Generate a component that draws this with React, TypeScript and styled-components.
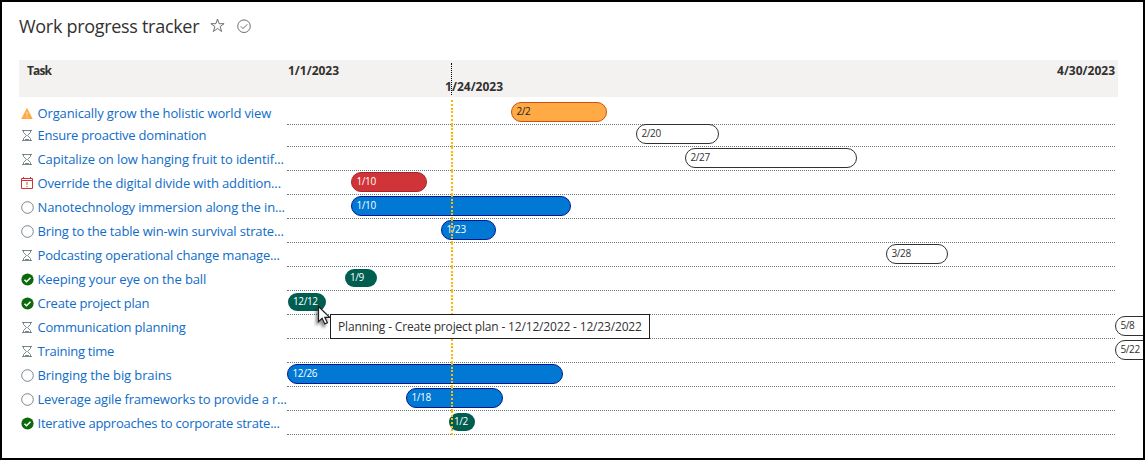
import React from 'react';
import styled, { createGlobalStyle, css } from 'styled-components';

const GlobalStyle = createGlobalStyle`
  * { box-sizing: border-box; }
  body {
    margin: 0;
    background: #fff;
    color: #323130;
    font-family: "Open Sans", "Noto Sans", sans-serif;
  }
`;

const Frame = styled.main`
  width: 1145px;
  height: 460px;
  border: 2px solid #000;
  padding-left: 17px;
  overflow: hidden;
`;

const TitleBar = styled.header`
  display: flex;
  align-items: center;
  height: 58px;
  padding-bottom: 11px;
`;

const Title = styled.h1`
  margin: 0;
  width: 191px;
  font-size: 18px;
  line-height: 24px;
  font-weight: 400;
  letter-spacing: -0.3px;
  white-space: nowrap;
`;

const TitleIcon = styled.svg`
  flex: none;
  width: 15px;
  height: 15px;
  margin-right: 12px;
  fill: none;
  stroke: #605e5c;
  stroke-width: 0.9;
`;

const Board = styled.section`
  position: relative;
  width: 1099px;
`;

const HeaderRow = styled.div`
  display: flex;
  height: 37px;
  margin-bottom: 1px;
  background: #f3f2f1;
  font-size: 12px;
  line-height: 16px;
  font-weight: 700;
`;

const TaskHeading = styled.div`
  width: 268px;
  padding: 3px 0 0 8px;
  letter-spacing: -0.9px;
`;

const DateScale = styled.div`
  display: flex;
  justify-content: space-between;
  width: 828px;
  padding: 3px 0 0 1px;
`;

const TodayMark = styled.div`
  width: 60px;
  margin-right: auto;
  margin-left: 106px;
  padding-top: 16px;
`;

const TodayTick = styled.i`
  position: absolute;
  left: 432px;
  top: 3px;
  height: 32px;
  border-left: 1px dotted #000;
`;

const Row = styled.div<{ $height: number }>`
  display: flex;
  height: ${(p) => p.$height}px;
`;

const NameCell = styled.div`
  display: flex;
  align-items: flex-end;
  width: 268px;
  padding: 0 0 3px 2px;
`;

const StatusIcon = styled.svg`
  flex: none;
  width: 13px;
  height: 13px;
  margin: 0 3.5px 2px 0;
`;

const TaskName = styled.a<{ $tracking: number }>`
  color: #0f6cc8;
  font-size: 13px;
  line-height: 18px;
  letter-spacing: ${(p) => p.$tracking}px;
  white-space: nowrap;
`;

const Track = styled.div<{ $first: boolean }>`
  position: relative;
  display: flex;
  align-items: flex-end;
  width: 828px;
  padding-bottom: 2px;
  border-bottom: 1px dotted #69797e;

  &::after {
    content: "";
    position: absolute;
    left: 164px;
    top: ${(p) => (p.$first ? 2 : 0)}px;
    bottom: -1px;
    width: 2px;
    background: repeating-linear-gradient(
      #ffb900 0 2px,
      transparent 2px calc((100% - 2px) / 6)
    );
  }
`;

type Tone = 'warning' | 'waiting' | 'late' | 'active' | 'done';

const tones = {
  warning: css`background: #ffaa44; border-color: #ca5010; color: #201f1e;`,
  waiting: css`background: #fff; border-color: #323130; color: #323130;`,
  late: css`background: #d13438; border-color: #a4262c; color: #fff;`,
  active: css`background: #0078d4; border-color: #00188f; color: #fff;`,
  done: css`
    height: 18px;
    margin-bottom: 1px;
    padding-left: 5px;
    border: 0;
    background: #005e50;
    color: #fff;
  `,
};

const Bar = styled.div<{ $start: number; $length: number; $tone: Tone }>`
  flex: none;
  width: ${(p) => p.$length}px;
  height: 20px;
  margin-left: ${(p) => p.$start}px;
  padding-left: 4.5px;
  border: 1px solid;
  border-radius: 10px;
  font-size: 10px;
  line-height: 17px;
  letter-spacing: -0.4px;
  white-space: nowrap;
  ${(p) => tones[p.$tone]}
`;

const Tooltip = styled.div`
  position: absolute;
  left: 311px;
  top: 254px;
  width: 320px;
  height: 25px;
  padding-left: 7px;
  border: 1px solid #201f1e;
  background: #fff;
  font-size: 12px;
  line-height: 24px;
  letter-spacing: -0.165px;
  white-space: nowrap;
`;

const Pointer = styled.svg`
  position: absolute;
  left: 298px;
  top: 245px;
  width: 18px;
  height: 24px;
  filter: drop-shadow(-2px 3px 1.5px rgba(0, 0, 0, 0.45));
`;

function Status({ tone }: { tone: Tone }) {
  return (
    <StatusIcon viewBox="0 0 13 13" fill="none">
      {tone === 'warning' && (
        <>
          <path d="M6 .8 11.8 12H.2Z" fill="#ffaa44" />
          <path d="M6 4.8v3.6M6 9.3v1.2" stroke="#fff" strokeWidth="0.7" />
        </>
      )}
      {tone === 'waiting' && (
        <path
          d="M1 1.5h10M1 11.5h10M2.5 1.5v2L5.4 6.5 2.5 9.5v2M9.5 1.5v2L6.6 6.5 9.5 9.5v2M4 10.5h4"
          stroke="#69797e"
          strokeWidth="0.9"
        />
      )}
      {tone === 'late' && (
        <>
          <path d="M.5 1.5h11v10H.5ZM.5 3.5h11M2.5 0v2M9.5 0v2" stroke="#d13438" />
          <path d="M6 5v3M6 9v1.2" stroke="#ca5010" />
        </>
      )}
      {tone === 'active' && <circle cx="6.5" cy="6.5" r="5.8" stroke="#69797e" strokeWidth="0.9" />}
      {tone === 'done' && (
        <>
          <circle cx="6.5" cy="6.5" r="6.1" fill="#0b6a0b" />
          <path d="m3.5 6.8 2 2 4-4" stroke="#fff" strokeWidth="1.5" />
        </>
      )}
    </StatusIcon>
  );
}

interface Task {
  name: string;
  tracking: number;
  tone: Tone;
  label: string;
  start: number;
  length: number;
}

const tasks: Task[] = [
  { name: 'Organically grow the holistic world view', tracking: -0.13, tone: 'warning', label: '2/2', start: 224, length: 96 },
  { name: 'Ensure proactive domination', tracking: -0.23, tone: 'waiting', label: '2/20', start: 349, length: 83 },
  { name: 'Capitalize on low hanging fruit to identif...', tracking: -0.11, tone: 'waiting', label: '2/27', start: 398, length: 172 },
  { name: 'Override the digital divide with addition...', tracking: -0.13, tone: 'late', label: '1/10', start: 64, length: 76 },
  { name: 'Nanotechnology immersion along the in...', tracking: -0.14, tone: 'active', label: '1/10', start: 64, length: 220 },
  { name: 'Bring to the table win-win survival strate...', tracking: -0.165, tone: 'active', label: '1/23', start: 154, length: 55 },
  { name: 'Podcasting operational change manage...', tracking: -0.17, tone: 'waiting', label: '3/28', start: 599, length: 62 },
  { name: 'Keeping your eye on the ball', tracking: -0.115, tone: 'done', label: '1/9', start: 58, length: 32 },
  { name: 'Create project plan', tracking: -0.2, tone: 'done', label: '12/12', start: 1, length: 38 },
  { name: 'Communication planning', tracking: -0.2, tone: 'waiting', label: '5/8', start: 828, length: 60 },
  { name: 'Training time', tracking: -0.26, tone: 'waiting', label: '5/22', start: 828, length: 60 },
  { name: 'Bringing the big brains', tracking: -0.11, tone: 'active', label: '12/26', start: 0, length: 276 },
  { name: 'Leverage agile frameworks to provide a r...', tracking: -0.18, tone: 'active', label: '1/18', start: 119, length: 97 },
  { name: 'Iterative approaches to corporate strate...', tracking: -0.23, tone: 'done', label: '1/2', start: 162, length: 26 },
];

const rowHeight = (index: number) => (index === 0 ? 27 : index === 1 ? 22 : 24);

export default function App() {
  return (
    <>
      <GlobalStyle />
      <Frame>
        <TitleBar>
          <Title>Work progress tracker</Title>
          <TitleIcon viewBox="0 0 15 15">
            <path d="m7.5 1 1.6 4.7h5L10.1 8.6l1.5 4.9-4.1-3-4.1 3 1.5-4.9L.9 5.7h5Z" />
          </TitleIcon>
          <TitleIcon viewBox="0 0 15 15">
            <circle cx="7" cy="8.2" r="6.3" />
            <path d="m3.8 8.4 2.2 2.2 4.3-4.3" />
          </TitleIcon>
        </TitleBar>
        <Board>
          <HeaderRow>
            <TaskHeading>Task</TaskHeading>
            <DateScale>
              <span>1/1/2023</span>
              <TodayMark>1/24/2023</TodayMark>
              <span>4/30/2023</span>
            </DateScale>
          </HeaderRow>
          {tasks.map((task, i) => (
            <Row key={task.name} $height={rowHeight(i)}>
              <NameCell>
                <Status tone={task.tone} />
                <TaskName $tracking={task.tracking}>{task.name}</TaskName>
              </NameCell>
              <Track $first={i === 0}>
                <Bar $start={task.start} $length={task.length} $tone={task.tone}>
                  {task.label}
                </Bar>
              </Track>
            </Row>
          ))}
          <TodayTick />
          <Tooltip>Planning - Create project plan - 12/12/2022 - 12/23/2022</Tooltip>
          <Pointer viewBox="0 0 18 24">
            <path
              d="M1.5 1.5v15.2l3.6-3.4 2.7 5.6 2.6-1.2-2.6-5.4h4.9Z"
              fill="#fff"
              stroke="#201f1e"
              strokeWidth="1.2"
            />
          </Pointer>
        </Board>
      </Frame>
    </>
  );
}
